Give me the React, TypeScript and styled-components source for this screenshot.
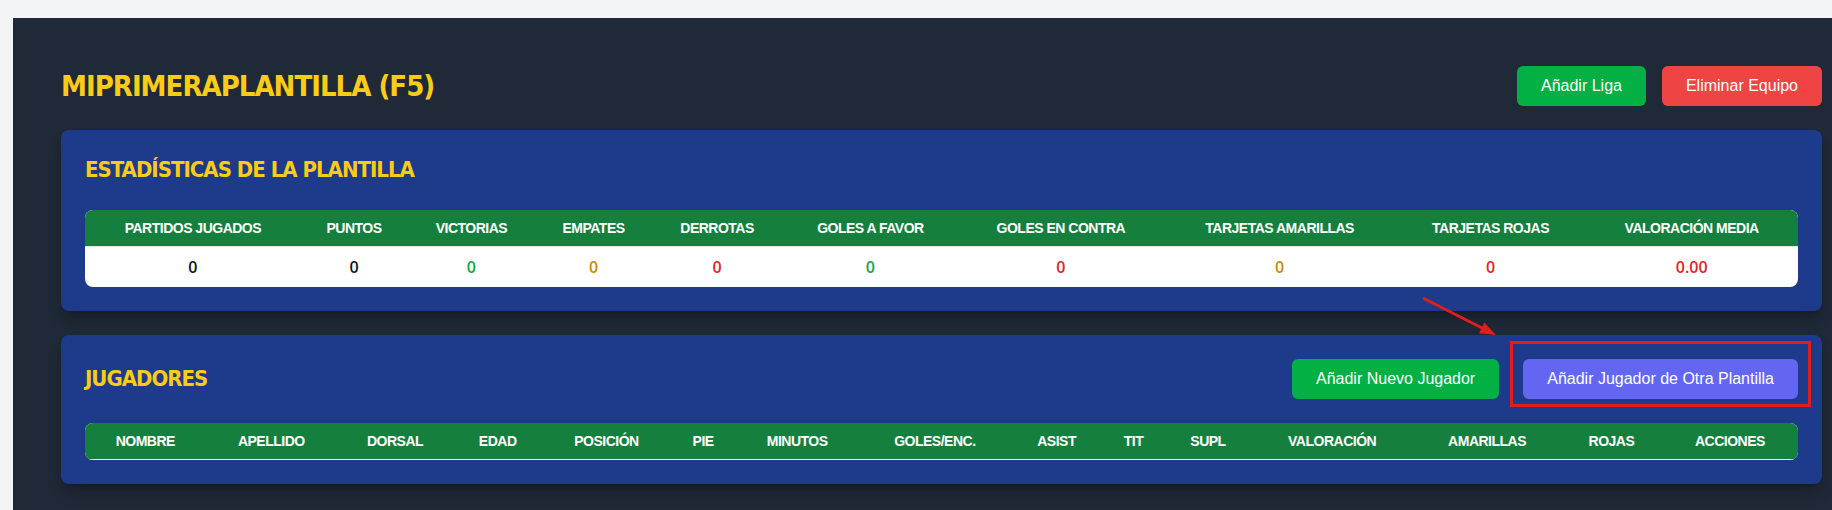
import React from "react";
import styled, { createGlobalStyle } from "styled-components";

const GlobalStyle = createGlobalStyle`
  html, body { margin: 0; padding: 0; background: #f3f4f6; }
  body { font-family: "Liberation Sans", Arial, sans-serif; }
  * { box-sizing: border-box; }
`;

const Page = styled.div`
  padding: 18px 0 0 13px;
  min-height: 510px;
`;

const Main = styled.main`
  background: #1f2937;
  min-height: 492px;
  padding: 48px 10px 48px 48px;
  display: flex;
  flex-direction: column;
  gap: 24px;
`;

const HeaderRow = styled.div`
  display: flex;
  align-items: center;
  justify-content: space-between;
`;

const PageTitle = styled.h1`
  margin: 0;
  font-family: "DejaVu Sans Condensed", "Liberation Sans", sans-serif;
  font-weight: 700;
  font-size: 29px;
  line-height: 40px;
  letter-spacing: -1px;
  color: #facc15;
`;

const ButtonGroup = styled.div<{ $gap: number }>`
  display: flex;
  align-items: center;
  gap: ${(p) => p.$gap}px;
`;

const variantBg = {
  green: "#02b043",
  red: "#ef4444",
  indigo: "#6366f1",
};

const Button = styled.button<{ $variant: keyof typeof variantBg }>`
  height: 40px;
  padding: 0 24px;
  border: none;
  border-radius: 6px;
  background: ${(p) => variantBg[p.$variant]};
  color: #ffffff;
  font-family: "Liberation Sans", Arial, sans-serif;
  font-size: 16px;
  white-space: nowrap;
  cursor: pointer;
`;

const Annotated = styled.span`
  position: relative;
  display: inline-flex;
  &::after {
    content: "";
    position: absolute;
    top: -18px;
    bottom: -8px;
    left: -13px;
    right: -13px;
    border: 3px solid #e11d1d;
    pointer-events: none;
  }
`;

const ArrowSvg = styled.svg`
  position: absolute;
  left: -103px;
  top: -64px;
  width: 80px;
  height: 44px;
  overflow: visible;
  pointer-events: none;
`;

const Card = styled.section`
  background: #1e3a8a;
  border-radius: 8px;
  padding: 24px;
  box-shadow: 0 10px 15px -3px rgba(0, 0, 0, 0.25), 0 4px 6px -4px rgba(0, 0, 0, 0.25);
  display: flex;
  flex-direction: column;
  gap: 24px;
`;

const SectionTitle = styled.h2`
  margin: 0;
  font-family: "DejaVu Sans Condensed", "Liberation Sans", sans-serif;
  font-weight: 700;
  font-size: 22px;
  line-height: 32px;
  letter-spacing: -1px;
  color: #facc15;
`;

const TableWrap = styled.div`
  background: #ffffff;
  border-radius: 8px;
  overflow: hidden;
`;

const Table = styled.table`
  width: 100%;
  border-collapse: collapse;
`;

const Th = styled.th`
  background: #15803d;
  color: #ffffff;
  font-family: "Liberation Sans", Arial, sans-serif;
  font-weight: 700;
  font-size: 14px;
  letter-spacing: -0.5px;
  line-height: 20px;
  padding: 8px 12px;
  text-align: center;
  white-space: nowrap;
  border-bottom: 1px solid #e5e7eb;
`;

const Td = styled.td<{ $color: string }>`
  color: ${(p) => p.$color};
  font-family: "Open Sans", "Liberation Sans", sans-serif;
  font-weight: 600;
  font-size: 16px;
  line-height: 20px;
  padding: 10px 12px;
  text-align: center;
`;

const stats: { label: string; value: string; color: string }[] = [
  { label: "Partidos Jugados", value: "0", color: "#111111" },
  { label: "Puntos", value: "0", color: "#111111" },
  { label: "Victorias", value: "0", color: "#16a34a" },
  { label: "Empates", value: "0", color: "#ca8a04" },
  { label: "Derrotas", value: "0", color: "#dc2626" },
  { label: "Goles a Favor", value: "0", color: "#16a34a" },
  { label: "Goles en Contra", value: "0", color: "#dc2626" },
  { label: "Tarjetas Amarillas", value: "0", color: "#ca8a04" },
  { label: "Tarjetas Rojas", value: "0", color: "#dc2626" },
  { label: "Valoración Media", value: "0.00", color: "#dc2626" },
];

const playerCols = [
  "Nombre",
  "Apellido",
  "Dorsal",
  "Edad",
  "Posición",
  "Pie",
  "Minutos",
  "Goles/Enc.",
  "Asist",
  "Tit",
  "Supl",
  "Valoración",
  "Amarillas",
  "Rojas",
  "Acciones",
];

export default function App() {
  return (
    <>
      <GlobalStyle />
      <Page>
        <Main>
          <HeaderRow>
            <PageTitle>MIPRIMERAPLANTILLA (F5)</PageTitle>
            <ButtonGroup $gap={16}>
              <Button $variant="green">Añadir Liga</Button>
              <Button $variant="red">Eliminar Equipo</Button>
            </ButtonGroup>
          </HeaderRow>

          <Card>
            <SectionTitle>ESTADÍSTICAS DE LA PLANTILLA</SectionTitle>
            <TableWrap>
              <Table>
                <thead>
                  <tr>
                    {stats.map((s) => (
                      <Th key={s.label}>{s.label.toUpperCase()}</Th>
                    ))}
                  </tr>
                </thead>
                <tbody>
                  <tr>
                    {stats.map((s) => (
                      <Td key={s.label} $color={s.color}>
                        {s.value}
                      </Td>
                    ))}
                  </tr>
                </tbody>
              </Table>
            </TableWrap>
          </Card>

          <Card>
            <HeaderRow>
              <SectionTitle>JUGADORES</SectionTitle>
              <ButtonGroup $gap={24}>
                <Button $variant="green">Añadir Nuevo Jugador</Button>
                <Annotated>
                  <Button $variant="indigo">Añadir Jugador de Otra Plantilla</Button>
                  <ArrowSvg viewBox="0 0 80 44">
                    <line x1="3" y1="3" x2="62" y2="33" stroke="#e11d1d" strokeWidth="3" />
                    <polygon points="76,40 59,38.2 64.4,27.4" fill="#e11d1d" />
                  </ArrowSvg>
                </Annotated>
              </ButtonGroup>
            </HeaderRow>
            <TableWrap>
              <Table>
                <thead>
                  <tr>
                    {playerCols.map((c) => (
                      <Th key={c}>{c.toUpperCase()}</Th>
                    ))}
                  </tr>
                </thead>
              </Table>
            </TableWrap>
          </Card>
        </Main>
      </Page>
    </>
  );
}
